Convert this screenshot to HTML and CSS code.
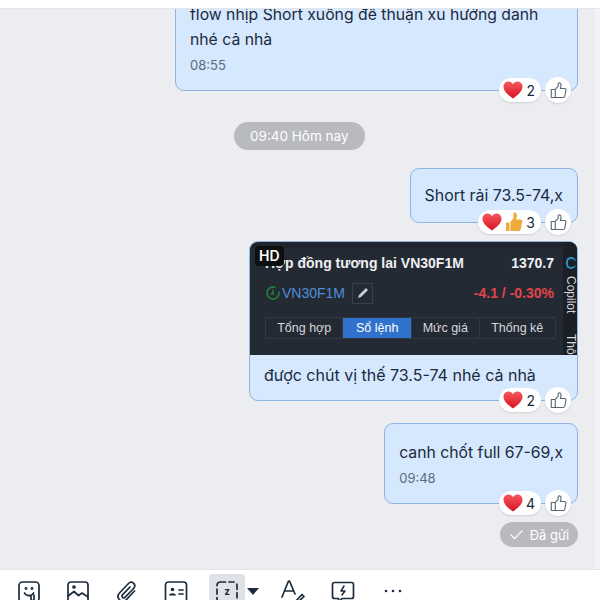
FILE: index.html
```html
<!DOCTYPE html>
<html lang="vi">
<head>
    <meta charset="UTF-8">
    <title>Chat</title>
    <link rel="stylesheet" href="styles.css">
</head>
<body>
    <svg class="icon-defs" width="0" height="0">
        <defs>
            <linearGradient id="heart-fill" x1="0" y1="0" x2="0" y2="1">
                <stop offset="0" stop-color="#f5565f"/>
                <stop offset="1" stop-color="#d8141f"/>
            </linearGradient>
            <symbol id="heart" viewBox="0 0 20 18">
                <path d="M10 17.500C4.500 13.500 .5 10.200 .5 5.800 .5 2.800 2.800 .6 5.500 .6 7.400 .6 9 1.600 10 3.300 11 1.600 12.600 .6 14.500 .6 17.200 .6 19.500 2.800 19.500 5.800 19.500 10.200 15.500 13.500 10 17.500Z" fill="url(#heart-fill)"/>
            </symbol>
            <symbol id="like" viewBox="0 0 20 20">
                <path d="M6.200 8.600 9.600 5.200V2.400C9.600 1.500 10.200 1 11 1 12.200 1 13 2 13 3.400 13 5 12.600 6.300 12.200 7.600H17C18.100 7.600 18.900 8.500 18.700 9.600L17.500 16.500C17.300 17.600 16.500 18.300 15.400 18.300H6.200ZM1.500 8.800H6.200V18.300H1.500Z" fill="none" stroke="#5a6472" stroke-width="1.300" stroke-linejoin="round"/>
            </symbol>
        </defs>
    </svg>

    <div class="topbar"></div>

    <div class="chat-area">
        <div class="messages">
            <div class="bubble msg-first">
                <p class="msg-text">flow nhịp Short xuống để thuận xu hướng danh</p>
                <p class="msg-text">nhé cả nhà</p>
                <p class="msg-time">08:55</p>
                <div class="reactions">
                    <span class="react-pill"><svg class="heart"><use href="#heart"/></svg>2</span>
                    <span class="like-btn"><svg class="like"><use href="#like"/></svg></span>
                </div>
            </div>

            <div class="time-pill">09:40 Hôm nay</div>

            <div class="bubble msg-short">
                <p class="msg-text">Short rải 73.5-74,x</p>
                <div class="reactions">
                    <span class="react-pill">
                        <svg class="heart"><use href="#heart"/></svg>
                        <svg class="thumb" viewBox="0 0 18 20">
                            <path d="M1 10.500H4.500V19H1ZM5.500 10 8.500 6V1.800C8.500 .9 9.100 .4 9.900 .4 11.200 .4 11.800 1.500 11.800 3 11.800 4.700 11.500 6 11.200 7.500H15.500C16.800 7.500 17.600 8.500 17.300 9.700L15.700 17.300C15.400 18.400 14.600 19 13.500 19H5.500Z" fill="#f0a93b"/>
                        </svg>
                        3
                    </span>
                    <span class="like-btn"><svg class="like"><use href="#like"/></svg></span>
                </div>
            </div>

            <div class="bubble msg-photo">
                <div class="shot">
                    <span class="hd-badge">HD</span>
                    <div class="shot-main">
                        <div class="shot-row shot-title">
                            <span>Hợp đồng tương lai VN30F1M</span>
                            <span>1370.7</span>
                        </div>
                        <div class="shot-row shot-symbol">
                            <span class="symbol-left">
                                <svg class="symbol-icon" viewBox="0 0 16 16">
                                    <circle cx="8" cy="8" r="6" fill="none" stroke="#1f8a3c" stroke-width="1.500" stroke-dasharray="30 5"/>
                                    <path d="M8 4.500V9H5.500" fill="none" stroke="#1f8a3c" stroke-width="1.300"/>
                                </svg>
                                <span class="symbol-name">VN30F1M</span>
                                <span class="edit-btn">
                                    <svg viewBox="0 0 14 14" width="14" height="14"><path d="M2 12 3 9 10 2 12 4 5 11Z" fill="#c9ccd1"/></svg>
                                </span>
                            </span>
                            <span class="shot-change">-4.1 / -0.30%</span>
                        </div>
                        <div class="shot-tabs">
                            <span class="shot-tab">Tổng hợp</span>
                            <span class="shot-tab active">Sổ lệnh</span>
                            <span class="shot-tab">Mức giá</span>
                            <span class="shot-tab">Thống kê</span>
                        </div>
                    </div>
                    <div class="shot-side">
                        <span class="side-dot"></span>
                        <span class="side-label">Copilot</span>
                        <span class="side-label side-low">Thô</span>
                    </div>
                </div>
                <p class="msg-text photo-caption">được chút vị thế 73.5-74 nhé cả nhà</p>
                <div class="reactions">
                    <span class="react-pill"><svg class="heart"><use href="#heart"/></svg>2</span>
                    <span class="like-btn"><svg class="like"><use href="#like"/></svg></span>
                </div>
            </div>

            <div class="bubble msg-last">
                <p class="msg-text">canh chốt full 67-69,x</p>
                <p class="msg-time">09:48</p>
                <div class="reactions">
                    <span class="react-pill"><svg class="heart"><use href="#heart"/></svg>4</span>
                    <span class="like-btn"><svg class="like"><use href="#like"/></svg></span>
                </div>
            </div>

            <div class="sent-pill">
                <svg viewBox="0 0 16 12" width="15" height="11"><path d="M1.500 6 6 10.500 14.500 1.500" fill="none" stroke="#fff" stroke-width="1.400"/></svg>
                Đã gửi
            </div>
        </div>
        <div class="scroll-strip"></div>
    </div>

    <div class="toolbar">
        <span class="tool">
            <svg viewBox="0 0 24 24"><rect x="2" y="2" width="20" height="20" rx="3.500"/><path d="M7.500 13C9 16.500 15 16.500 16.500 13M14 16V19C14 21 17 21 17 19V15"/><circle cx="9" cy="8.500" r=".6"/><circle cx="15" cy="8.500" r=".6"/></svg>
        </span>
        <span class="tool">
            <svg viewBox="0 0 24 24"><rect x="2" y="2" width="20" height="21" rx="3"/><path d="M2 16 8 11.500 12.500 15.500 16 13 22 17"/><circle cx="8" cy="7" r="1"/></svg>
        </span>
        <span class="tool">
            <svg viewBox="0 0 24 24"><path d="M19.500 11 11.500 19.500C9.500 21.500 6 21.500 4.200 19.500 2.500 17.500 2.700 14.800 4.500 13L13.500 3.500C15 2 17.200 2 18.700 3.400 20.100 4.900 20 7 18.600 8.500L10.200 17.200C9.400 18 8.200 18 7.500 17.300 6.800 16.500 6.900 15.400 7.700 14.600L15 7"/></svg>
        </span>
        <span class="tool">
            <svg viewBox="0 0 24 24"><rect x="1.500" y="2" width="21" height="21" rx="3"/><circle cx="8.500" cy="9.500" r="1.800" class="solid"/><path d="M5 15.500C5 12.500 12 12.500 12 15.500Z" class="solid"/><path d="M15 10H19M15 14H19"/></svg>
        </span>
        <span class="tool tool-active">
            <svg viewBox="0 0 24 24"><rect x="2" y="2" width="20" height="20" rx="3.500" stroke-dasharray="5 3.500"/><text x="12" y="15" class="tool-z">z</text></svg>
        </span>
        <span class="caret"></span>
        <span class="tool tool-font">
            <svg viewBox="0 0 24 24"><path d="M1 17 7.500 1H8.500L14 14M4 11H11.500M14 22 21 14.500 23 16.500 16 23 13.500 23.500Z"/></svg>
        </span>
        <span class="tool tool-after">
            <svg viewBox="0 0 24 24"><path d="M3.500 2.500H20.500C21.500 2.500 22.500 3.500 22.500 4.500V16.500C22.500 17.500 21.500 18.500 20.500 18.500H11L7.500 22V18.500H3.500C2.500 18.500 1.500 17.500 1.500 16.500V4.500C1.500 3.500 2.500 2.500 3.500 2.500Z"/><path d="M13 6 10 11H14L11 15" class="bolt"/></svg>
        </span>
        <span class="tool tool-after">
            <svg viewBox="0 0 24 24"><circle cx="5" cy="11" r="1.300" class="solid"/><circle cx="12" cy="11" r="1.300" class="solid"/><circle cx="19" cy="11" r="1.300" class="solid"/></svg>
        </span>
    </div>
</body>
</html>
```

FILE: styles.css
```css
* {
    margin: 0;
    padding: 0;
    box-sizing: border-box;
}

body {
    width: 600px;
    height: 600px;
    overflow: hidden;
    display: flex;
    flex-direction: column;
    font-family: "Inter", "Noto Sans", sans-serif;
    color: #1b2a3d;
    background-color: #ecedf0;
}

.icon-defs {
    position: absolute;
}

.topbar {
    height: 9px;
    flex: none;
    background-color: #fff;
    border-bottom: 1px solid #e4e5e8;
    position: relative;
    z-index: 1;
}

.chat-area {
    flex: 1;
    min-height: 0;
    display: flex;
}

.messages {
    flex: 1;
    min-width: 0;
    display: flex;
    flex-direction: column;
    justify-content: flex-end;
    align-items: flex-end;
    padding: 0 17px 22px 0;
}

.scroll-strip {
    width: 5px;
    background-color: #f3f3f5;
}

.bubble {
    position: relative;
    flex: none;
    background-color: #d6e8fd;
    border: 1px solid #8fb4e3;
    border-radius: 9px;
    padding: 14px;
}

.msg-text {
    font-size: 15.750px;
    line-height: 25px;
    white-space: nowrap;
}

.msg-time {
    font-size: 13px;
    line-height: 20px;
    margin-top: 3px;
    color: #5c6b7c;
}

.msg-first {
    width: 403px;
    padding: 16px 14px 15px;
}

.msg-short,
.msg-photo {
    margin-top: 18px;
}

.msg-short .msg-text {
    font-size: 15.900px;
}

.msg-last {
    margin-top: 22px;
    padding: 16px 14px 15px;
}

.msg-photo {
    width: 329px;
    padding: 0;
}

.photo-caption {
    padding: 8px 14px 12px;
    font-size: 16px;
}

.time-pill {
    flex: none;
    align-self: flex-start;
    margin: 31px 0 0 234px;
    height: 28px;
    line-height: 28px;
    padding: 0 16px;
    border-radius: 14px;
    font-size: 13.500px;
    color: #fff;
    background-color: #b9babd;
}

.sent-pill {
    flex: none;
    width: 78px;
    height: 25px;
    margin-top: 18px;
    border-radius: 13px;
    display: flex;
    align-items: center;
    justify-content: center;
    gap: 6px;
    font-size: 13px;
    color: #fff;
    background-color: #b9babd;
}

/* reaction chips sit over the bubble's bottom edge */
.reactions {
    position: absolute;
    right: 6px;
    bottom: -13px;
    display: flex;
    align-items: center;
    gap: 4px;
}

.react-pill {
    height: 24px;
    padding: 0 6px 0 4px;
    border-radius: 12px;
    display: flex;
    align-items: center;
    gap: 3px;
    font-size: 14px;
    background-color: #fff;
    box-shadow: 0 1px 2px rgba(0, 0, 0, 0.12);
}

.like-btn {
    width: 26px;
    height: 26px;
    border-radius: 50%;
    display: flex;
    align-items: center;
    justify-content: center;
    background-color: #fff;
    box-shadow: 0 1px 2px rgba(0, 0, 0, 0.12);
}

.heart {
    width: 20px;
    height: 18px;
}

.thumb {
    width: 18px;
    height: 20px;
}

.like {
    width: 17px;
    height: 17px;
}

/* the attached screenshot */
.shot {
    position: relative;
    height: 113px;
    display: flex;
    background-color: #1f232b;
    border-radius: 8px 8px 0 0;
    overflow: hidden;
    font-family: "Liberation Sans", sans-serif;
    color: #fff;
}

.hd-badge {
    position: absolute;
    left: 5px;
    top: 4px;
    padding: 0 4px;
    height: 20px;
    line-height: 20px;
    font-family: "Inter", sans-serif;
    font-size: 14px;
    font-weight: 600;
    border-radius: 4px;
    background-color: #0d0e10;
}

.shot-main {
    flex: 1;
    min-width: 0;
    padding: 0 7px 0 15px;
    background-color: #242a34;
    margin-top: 6px;
}

.shot-row {
    display: flex;
    justify-content: space-between;
    align-items: center;
    padding-right: 2px;
}

.shot-title {
    height: 30px;
    font-size: 14px;
    font-weight: 700;
    color: #eef0f3;
}

.shot-symbol {
    height: 24px;
    margin-top: 3px;
}

.symbol-left {
    display: flex;
    align-items: center;
}

.symbol-icon {
    width: 16px;
    height: 16px;
}

.symbol-name {
    font-size: 14px;
    margin: 0 7px 0 1px;
    color: #4f8fd6;
}

.edit-btn {
    width: 21px;
    height: 21px;
    display: flex;
    align-items: center;
    justify-content: center;
    border: 1px solid #3a404a;
}

.shot-change {
    font-size: 14px;
    font-weight: 700;
    color: #e0454b;
}

.shot-tabs {
    margin-top: 12px;
    display: grid;
    grid-template-columns: 77fr 69fr 68fr 77fr;
    height: 22px;
    border: 1px solid #333944;
}

.shot-tab {
    font-size: 12.500px;
    line-height: 20px;
    text-align: center;
    color: #d5d8dc;
    border-left: 1px solid #333944;
}

.shot-tab:first-child {
    border-left: none;
}

.shot-tab.active {
    color: #fff;
    background-color: #2f71cc;
}

.shot-side {
    width: 14px;
    flex: none;
    position: relative;
    background-color: #1b1f26;
}

.side-dot {
    position: absolute;
    left: 3px;
    top: 15px;
    width: 10px;
    height: 12px;
    border-radius: 5px;
    border: 2px solid #2d8fc4;
    border-right: none;
}

.side-label {
    position: absolute;
    left: 1px;
    top: 34px;
    font-size: 12px;
    writing-mode: vertical-rl;
    color: #d5d8dc;
}

.side-low {
    top: 92px;
}

/* bottom composer toolbar, icons get cut off by the window edge */
.toolbar {
    flex: none;
    height: 31px;
    display: flex;
    align-items: flex-start;
    padding: 10px 0 0 17px;
    gap: 25px;
    overflow: hidden;
    background-color: #fff;
    border-top: 1px solid #e4e5e8;
}

.tool {
    flex: none;
    width: 24px;
    height: 24px;
}

.tool svg {
    width: 24px;
    height: 24px;
    fill: none;
    stroke: #1e2b3d;
    stroke-width: 1.700;
    stroke-linecap: round;
    stroke-linejoin: round;
}

.tool .solid {
    fill: #1e2b3d;
    stroke: none;
}

.tool .bolt {
    stroke-width: 1.500;
}

.tool-z {
    font-size: 10px;
    font-weight: 700;
    text-anchor: middle;
    fill: #1e2b3d;
    stroke: none;
}

.tool-active {
    width: 36px;
    height: 30px;
    margin: -6px 0 0 -4px;
    padding: 6px 6px 0;
    border-radius: 4px 4px 0 0;
    background-color: #dfe2e7;
}

.caret {
    flex: none;
    margin: 8px 0 0 -23px;
    border-left: 6px solid transparent;
    border-right: 6px solid transparent;
    border-top: 7px solid #1e2b3d;
}

.tool-font {
    margin-left: -3px;
}

.tool-after {
    margin-left: 1px;
}
```
